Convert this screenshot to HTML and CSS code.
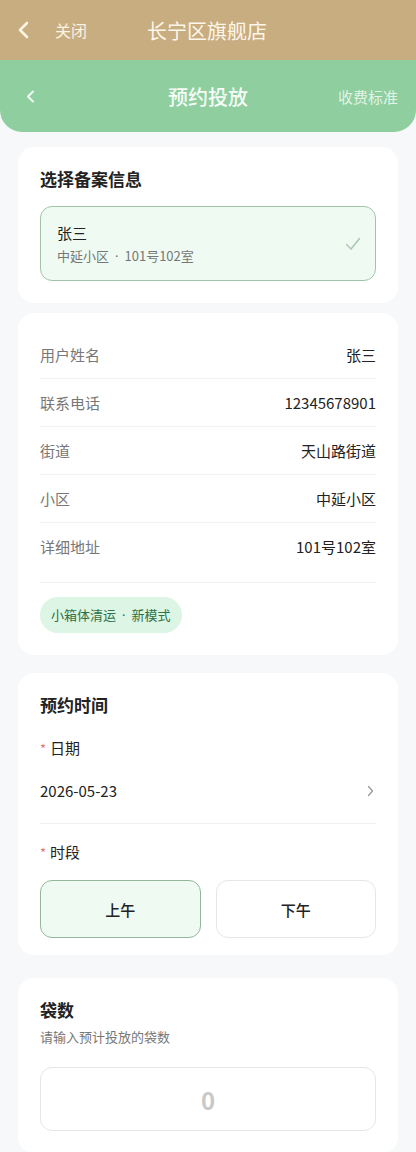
FILE: index.html
```html
<!DOCTYPE html>
<html lang="zh-CN">
<head>
    <meta charset="UTF-8">
    <meta name="viewport" content="width=device-width, initial-scale=1.0">
    <title>预约投放</title>
    <link rel="stylesheet" href="styles.css">
</head>
<body>
    <div class="topbar">
        <svg class="top-back" width="12" height="18" viewBox="0 0 12 18"><path d="M10 2 L3 9 L10 16" fill="none" stroke="#fbf3e4" stroke-width="2.6" stroke-linecap="round" stroke-linejoin="round"/></svg>
        <span class="close">关闭</span>
        <span class="shop">长宁区旗舰店</span>
    </div>

    <div class="navbar">
        <svg class="nav-back" width="9" height="13" viewBox="0 0 9 13"><path d="M7 1.5 L2 6.5 L7 11.5" fill="none" stroke="#f2fbf4" stroke-width="2" stroke-linecap="round" stroke-linejoin="round"/></svg>
        <span class="nav-title">预约投放</span>
        <span class="nav-link">收费标准</span>
    </div>

    <div class="content">
        <div class="card">
            <h2 class="card-title">选择备案信息</h2>
            <div class="record selected">
                <div>
                    <div class="record-name">张三</div>
                    <div class="record-addr">中延小区<span class="dot">·</span>101号102室</div>
                </div>
                <svg class="check" width="16" height="14" viewBox="0 0 16 14"><path d="M1.5 7.5 L6 12 L14.5 1.5" fill="none" stroke="#a9c4b0" stroke-width="1.4" stroke-linecap="round" stroke-linejoin="round"/></svg>
            </div>
        </div>

        <div class="card info-card">
            <div class="row"><span class="label">用户姓名</span><span class="value">张三</span></div>
            <div class="row"><span class="label">联系电话</span><span class="value">12345678901</span></div>
            <div class="row"><span class="label">街道</span><span class="value">天山路街道</span></div>
            <div class="row"><span class="label">小区</span><span class="value">中延小区</span></div>
            <div class="row last"><span class="label">详细地址</span><span class="value">101号102室</span></div>
            <div class="divider"></div>
            <span class="tag">小箱体清运<span class="dot">·</span>新模式</span>
        </div>

        <div class="card time-card">
            <h2 class="card-title">预约时间</h2>
            <div class="field-label"><span class="star">*</span>日期</div>
            <div class="date-row">
                <span>2026-05-23</span>
                <svg width="7" height="12" viewBox="0 0 7 12"><path d="M1.5 1.5 L5.5 6 L1.5 10.5" fill="none" stroke="#9a9a9a" stroke-width="1.3" stroke-linecap="round" stroke-linejoin="round"/></svg>
            </div>
            <div class="field-label slot-label"><span class="star">*</span>时段</div>
            <div class="slots">
                <button class="slot active">上午</button>
                <button class="slot">下午</button>
            </div>
        </div>

        <div class="card count-card">
            <h2 class="card-title">袋数</h2>
            <div class="hint">请输入预计投放的袋数</div>
            <div class="count-box">0</div>
        </div>
    </div>
</body>
</html>
```

FILE: styles.css
```css
body {
    margin: 0;
    font-family: "Noto Sans CJK SC", "Noto Sans", sans-serif;
    background-color: #f6f8fa;
    color: #222;
}

.topbar {
    height: 60px;
    background: #c8ad80;
    display: flex;
    align-items: center;
    padding-left: 17px;
}

.close {
    margin-left: 26px;
    font-size: 16px;
    color: #fbf3e4;
}

.shop {
    margin-left: 60px;
    font-size: 20px;
    color: #fdf6ea;
}

.navbar {
    height: 72px;
    background: #8fce9e;
    border-radius: 0 0 22px 22px;
    display: flex;
    align-items: center;
    position: relative;
    padding: 0 18px 0 26px;
    margin-bottom: 15px;
}

.nav-title {
    position: absolute;
    left: 0;
    right: 0;
    text-align: center;
    font-size: 20px;
    font-weight: 500;
    color: #f6fcf7;
}

.nav-link {
    margin-left: auto;
    font-size: 15px;
    color: #e2f4e6;
    position: relative;
}

.content {
    padding: 0 18px;
    display: flex;
    flex-direction: column;
    gap: 10px;
}

.card {
    background: #fff;
    border-radius: 16px;
    padding: 20px 22px 22px;
}

.card-title {
    margin: 0;
    font-size: 17px;
    font-weight: 700;
    line-height: 24px;
}

.dot {
    font-family: "Noto Sans", sans-serif;
    margin: 0 6px;
}

.record {
    margin-top: 15px;
    height: 75px;
    box-sizing: border-box;
    border-radius: 12px;
    display: flex;
    align-items: center;
    justify-content: space-between;
    padding: 0 14px 0 16px;
}

.record.selected {
    background: #effbf2;
    border: 1.5px solid #9fc4a8;
}

.record-name {
    font-size: 15px;
    line-height: 22px;
}

.record-addr {
    font-size: 13px;
    color: #777;
    line-height: 20px;
    margin-top: 2px;
}

.info-card {
    padding-top: 18px;
}

.row {
    height: 47px;
    display: flex;
    align-items: center;
    justify-content: space-between;
    font-size: 15px;
    border-bottom: 1px solid #f2f3f4;
}

.row.last {
    border-bottom: none;
}

.label {
    color: #777;
}

.value {
    color: #222;
}

.divider {
    height: 1px;
    background: #f2f3f4;
    margin-top: 12px;
}

.tag {
    display: inline-block;
    margin-top: 14px;
    height: 36px;
    line-height: 36px;
    padding: 0 11px;
    border-radius: 18px;
    background: #dcf5e4;
    color: #2f7046;
    font-size: 13px;
}

.time-card {
    margin-top: 8px;
    padding-bottom: 17px;
}

.count-card {
    margin-top: 13px;
}

.field-label {
    margin-top: 20px;
    font-size: 15px;
    line-height: 22px;
}

.star {
    color: #e0797b;
    margin-right: 4px;
    font-size: 13px;
}

.date-row {
    height: 64px;
    display: flex;
    align-items: center;
    justify-content: space-between;
    font-size: 15px;
    border-bottom: 1px solid #eeeff0;
    padding-right: 2px;
    padding-bottom: 2px;
    box-sizing: border-box;
}

.slot-label {
    margin-top: 17px;
}

.slots {
    margin-top: 16px;
    display: grid;
    grid-template-columns: 1fr 1fr;
    gap: 15px;
}

.slot {
    height: 58px;
    border-radius: 12px;
    border: 1.5px solid #e6e6e6;
    background: #fff;
    font-family: inherit;
    font-size: 15px;
    color: #222;
    font-weight: 500;
}

.slot.active {
    background: #effbf2;
    border-color: #93b79c;
}

.hint {
    margin-top: 5px;
    font-size: 13px;
    color: #777;
    line-height: 20px;
}

.count-box {
    margin-top: 20px;
    height: 64px;
    box-sizing: border-box;
    border: 1.5px solid #e6e6e6;
    border-radius: 12px;
    display: flex;
    align-items: center;
    justify-content: center;
    font-size: 24px;
    font-weight: 700;
    color: #c9c9c9;
}
```
